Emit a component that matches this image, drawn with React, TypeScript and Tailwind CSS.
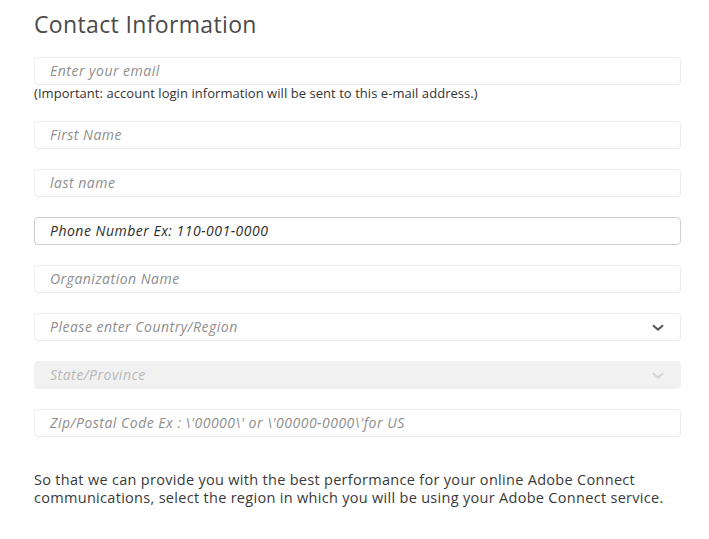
import React from "react";

function Field({ placeholder, strong, disabled, select }: { placeholder: string; strong?: boolean; disabled?: boolean; select?: boolean }) {
  return (
    <div
      className={
        "flex h-[28px] items-center justify-between rounded-[4px] border pl-[15px] pr-[16px] " +
        (disabled ? "border-[#f1f1f1] bg-[#f1f1f1]" : strong ? "border-[#cfcfcf] bg-white" : "border-[#ebebeb] bg-white")
      }
    >
      <span
        className={
          "text-[14px] italic leading-[18px] tracking-[0.5px] " +
          (strong ? "text-[#2c2c2c]" : disabled ? "text-[#b8b8b8]" : "text-[#8e8e8e]")
        }
      >
        {placeholder}
      </span>
      {select && (
        <svg width="12" height="8" viewBox="0 0 12 8" className="mt-[1px]">
          <path
            d="M1.5 1.8 L6 5.6 L10.5 1.8"
            fill="none"
            stroke={disabled ? "#d4d4d4" : "#555"}
            strokeWidth="2"
            strokeLinecap="round"
          />
        </svg>
      )}
    </div>
  );
}

export default function App() {
  return (
    <div className="min-h-[539px] w-[709px] bg-white pl-[34px] pr-[28px] pt-[10px] font-['Open_Sans',sans-serif]">
      <h1 className="text-[23px] font-normal leading-[28px] tracking-[0.35px] text-[#4b4b4b]">Contact Information</h1>

      <div className="mt-[19px]">
        <Field placeholder="Enter your email" />
        <p className="mt-[1px] text-[13px] leading-[15px] tracking-[0.05px] text-[#333]">
          (Important: account login information will be sent to this e-mail address.)
        </p>
      </div>

      <div className="mt-[20px] flex flex-col gap-[20px]">
        <Field placeholder="First Name" />
        <Field placeholder="last name" />
        <Field placeholder="Phone Number Ex: 110-001-0000" strong />
        <Field placeholder="Organization Name" />
        <Field placeholder="Please enter Country/Region" select />
        <Field placeholder="State/Province" disabled select />
        <Field placeholder="Zip/Postal Code Ex : \'00000\' or \'00000-0000\'for US" />
      </div>

      <p className="mt-[34px] text-[14.5px] leading-[18px] tracking-[0.3px] text-[#3a3a3a]">
        So that we can provide you with the best performance for your online Adobe Connect communications, select the
        region in which you will be using your Adobe Connect service.
      </p>
    </div>
  );
}
